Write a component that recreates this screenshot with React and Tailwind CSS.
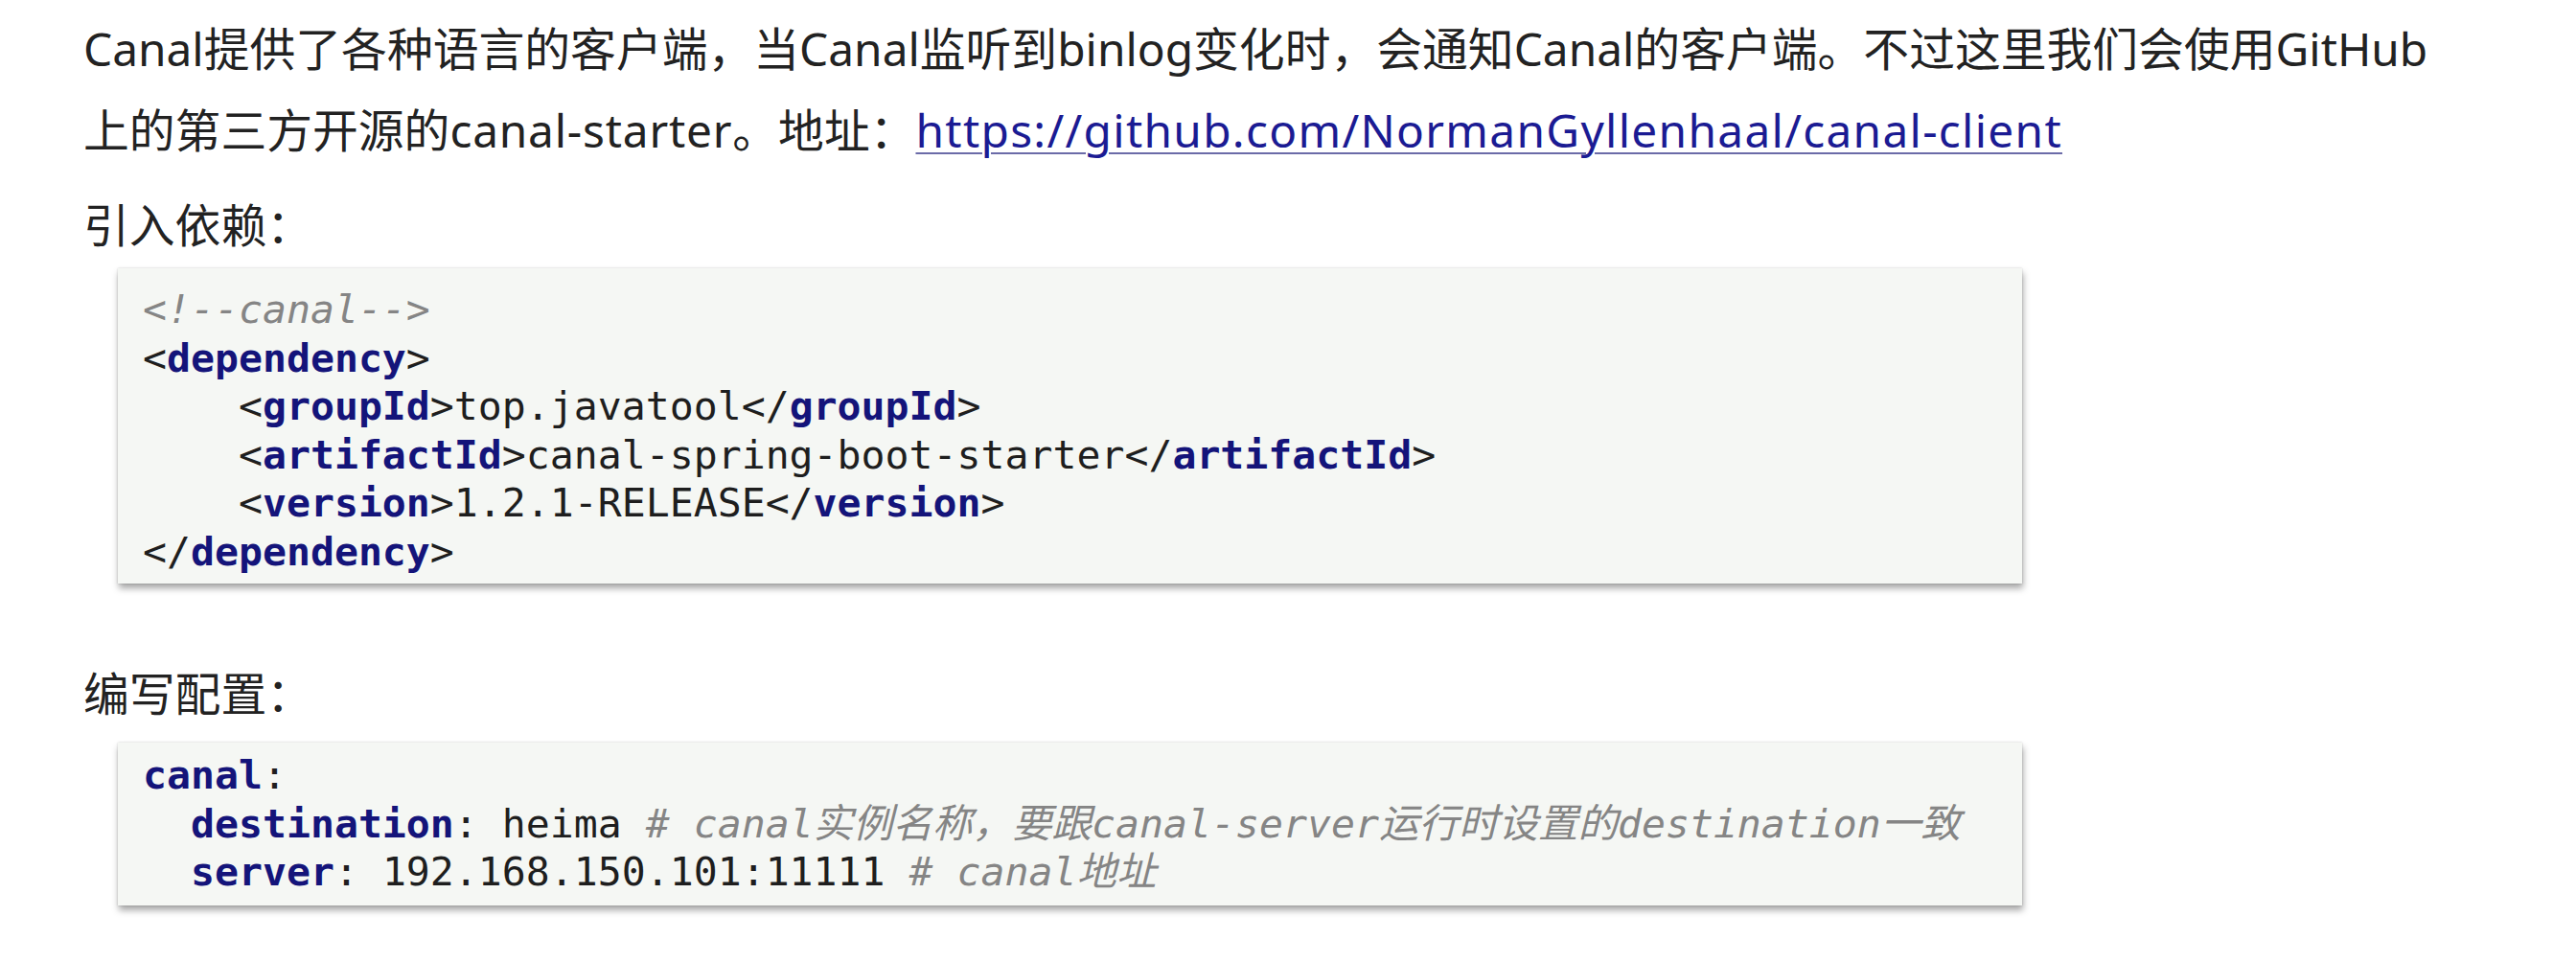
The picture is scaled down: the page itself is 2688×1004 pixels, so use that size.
export default function App() {
  const body = { fontFamily: '"Noto Sans", "Noto Sans CJK SC", sans-serif' };
  const mono = { fontFamily: '"DejaVu Sans Mono", "Noto Sans CJK SC", monospace' };

  const Tag = ({ children }) => <span className="font-bold text-[#14147a]">{children}</span>;
  const Cm = ({ children }) => <span className="italic text-[#858585]">{children}</span>;

  return (
    <div className="min-h-screen bg-white pl-[87px] pt-[8px] text-[#222222]" style={body}>
      <div className="text-[47.8px] leading-[85px] whitespace-nowrap">
        <div>Canal提供了各种语言的客户端，当Canal监听到binlog变化时，会通知Canal的客户端。不过这里我们会使用GitHub</div>
        <div>
          上的第三方开源的<span className="tracking-[0.8px]">canal-starter</span>。地址：
          <a href="#" className="text-[#1b1b93] tracking-[1.3px] underline decoration-[#6b6ba8] decoration-2 underline-offset-[5px]">
            https://github.com/NormanGyllenhaal/canal-client
          </a>
        </div>
      </div>

      <div className="mt-[14px] text-[47.8px] leading-[85px]">引入依赖：</div>

      <div
        className="mt-[3px] ml-[36px] w-[1987px] bg-[#f5f7f4] pl-[26px] pt-[18px] pb-[8px] text-[41.5px] leading-[50.5px] text-[#1e1e1e] whitespace-pre shadow-[0_0_2px_rgba(0,0,0,0.18),1px_5px_7px_rgba(0,0,0,0.35)]"
        style={mono}
      >
        <div><Cm>{'<!--canal-->'}</Cm></div>
        <div>{'<'}<Tag>dependency</Tag>{'>'}</div>
        <div>{'    <'}<Tag>groupId</Tag>{'>top.javatool</'}<Tag>groupId</Tag>{'>'}</div>
        <div>{'    <'}<Tag>artifactId</Tag>{'>canal-spring-boot-starter</'}<Tag>artifactId</Tag>{'>'}</div>
        <div>{'    <'}<Tag>version</Tag>{'>1.2.1-RELEASE</'}<Tag>version</Tag>{'>'}</div>
        <div>{'</'}<Tag>dependency</Tag>{'>'}</div>
      </div>

      <div className="mt-[72px] text-[47.8px] leading-[85px]">编写配置：</div>

      <div
        className="mt-[9px] ml-[36px] w-[1987px] bg-[#f5f7f4] pl-[26px] pt-[9px] pb-[9px] text-[41.5px] leading-[50.5px] text-[#1e1e1e] whitespace-pre shadow-[0_0_2px_rgba(0,0,0,0.18),1px_5px_7px_rgba(0,0,0,0.35)]"
        style={mono}
      >
        <div><Tag>canal</Tag>:</div>
        <div>{'  '}<Tag>destination</Tag>{': heima '}<Cm>{'# canal实例名称，要跟canal-server运行时设置的destination一致'}</Cm></div>
        <div>{'  '}<Tag>server</Tag>{': 192.168.150.101:11111 '}<Cm>{'# canal地址'}</Cm></div>
      </div>
    </div>
  );
}
